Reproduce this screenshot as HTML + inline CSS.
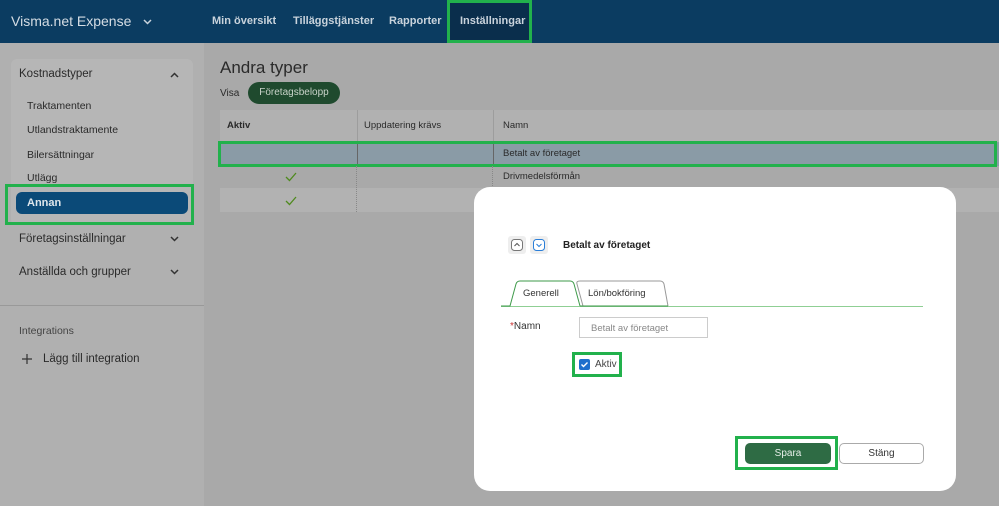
<!DOCTYPE html>
<html><head><meta charset="utf-8"><style>
*{box-sizing:border-box;margin:0;padding:0}
body{width:999px;height:506px;overflow:hidden;position:relative;background:#a9a9a9;font-family:"Liberation Sans",sans-serif;color:#2a2a2a}
.a{position:absolute}
.hdr{left:0;top:0;width:999px;height:43px;background:#0b3c61;color:#c9d3dc}
.hl{border:3px solid #22b14c}
.t{font-size:10.5px}
.nav{font-size:11px;font-weight:bold;top:15px}
</style></head><body>
<div class="a hdr">
 <div class="a" style="left:11px;top:13px;font-size:14px;color:#d5dde4">Visma.net Expense</div>
 <svg class="a" style="left:143px;top:19px" width="9" height="6"><path d="M1 1 L4.5 4.5 L8 1" stroke="#c9d3dc" stroke-width="1.5" fill="none"/></svg>
 <div class="a nav" style="left:212px">Min översikt</div>
 <div class="a nav" style="left:293px">Tilläggstjänster</div>
 <div class="a nav" style="left:389px">Rapporter</div>
 <div class="a hl" style="left:447px;top:0;width:85px;height:43px;background:#0a2e4c"></div>
 <div class="a nav" style="left:460px">Inställningar</div>
</div>
<div class="a" style="left:0;top:43px;width:204px;height:463px;background:#b0b0b0"></div>
<div class="a" style="left:11px;top:59px;width:182px;height:166px;background:#b6b6b6;border-radius:6px"></div>
<div class="a" style="left:19px;top:68px;font-size:11.5px">Kostnadstyper</div>
<svg class="a" style="left:170px;top:72px" width="9" height="6"><path d="M1 5 L4.5 1.5 L8 5" stroke="#333" stroke-width="1.5" fill="none"/></svg>
<div class="a t" style="left:27px;top:100px">Traktamenten</div>
<div class="a t" style="left:27px;top:124px">Utlandstraktamente</div>
<div class="a t" style="left:27px;top:149px">Bilersättningar</div>
<div class="a t" style="left:27px;top:172px">Utlägg</div>
<div class="a hl" style="left:5px;top:184px;width:189px;height:41px"></div>
<div class="a" style="left:16px;top:192px;width:172px;height:22px;background:#0b4a78;border-radius:6px;color:#dfe6ec;font-size:11px;font-weight:bold;padding:5px 11px">Annan</div>
<div class="a" style="left:19px;top:233px;font-size:11.5px">Företagsinställningar</div>
<svg class="a" style="left:170px;top:236px" width="9" height="6"><path d="M1 1 L4.5 4.5 L8 1" stroke="#333" stroke-width="1.5" fill="none"/></svg>
<div class="a" style="left:19px;top:266px;font-size:11.5px">Anställda och grupper</div>
<svg class="a" style="left:170px;top:269px" width="9" height="6"><path d="M1 1 L4.5 4.5 L8 1" stroke="#333" stroke-width="1.5" fill="none"/></svg>
<div class="a" style="left:0;top:305px;width:204px;height:1px;background:#999"></div>
<div class="a t" style="left:19px;top:325px;color:#444">Integrations</div>
<svg class="a" style="left:22px;top:354px" width="10" height="10"><path d="M5 0 V10 M0 5 H10" stroke="#333" stroke-width="1.2"/></svg>
<div class="a" style="left:43px;top:353px;font-size:11.5px">Lägg till integration</div>

<div class="a" style="left:220px;top:58px;font-size:17px">Andra typer</div>
<div class="a" style="left:220px;top:88px;font-size:10px">Visa</div>
<div class="a" style="left:248px;top:82px;width:92px;height:22px;border-radius:11px;background:#1f4a2e;color:#c9d3c9;font-size:10px;text-align:center;line-height:22px">Företagsbelopp</div>
<div class="a" style="left:220px;top:110px;width:779px;height:32px;background:#b1b1b1"></div>
<div class="a" style="left:357px;top:110px;width:1px;height:32px;background:#9d9d9d"></div>
<div class="a" style="left:493px;top:110px;width:1px;height:32px;background:#9d9d9d"></div>
<div class="a" style="left:227px;top:120px;font-size:9.5px;font-weight:bold">Aktiv</div>
<div class="a" style="left:364px;top:120px;font-size:9.5px">Uppdatering krävs</div>
<div class="a" style="left:503px;top:120px;font-size:9.5px">Namn</div>
<div class="a" style="left:220px;top:142px;width:779px;height:24px;background:#8a9ba6"></div>
<div class="a" style="left:357px;top:142px;width:1px;height:24px;background:#666"></div>
<div class="a" style="left:493px;top:142px;width:1px;height:24px;background:#666"></div>
<div class="a hl" style="left:218px;top:141px;width:779px;height:26px"></div>
<div class="a" style="left:503px;top:148px;font-size:9.5px">Betalt av företaget</div>
<div class="a" style="left:220px;top:188px;width:779px;height:24px;background:#b2b2b2"></div>
<div class="a" style="left:356px;top:166px;width:0;height:46px;border-left:1px dotted #888"></div>
<div class="a" style="left:492px;top:166px;width:0;height:24px;border-left:1px dotted #888"></div>
<svg class="a" style="left:285px;top:172px" width="12" height="10"><path d="M1 5 L4.5 8.5 L11 1" stroke="#4f8a1e" stroke-width="1.3" fill="none"/></svg>
<svg class="a" style="left:285px;top:196px" width="12" height="10"><path d="M1 5 L4.5 8.5 L11 1" stroke="#4f8a1e" stroke-width="1.3" fill="none"/></svg>
<div class="a" style="left:503px;top:171px;font-size:9.5px">Drivmedelsförmån</div>

<div class="a" style="left:474px;top:187px;width:482px;height:304px;background:#fff;border-radius:16px"></div>
<div class="a" style="left:508px;top:236px;width:18px;height:18px;background:#eee;border-radius:3px"></div>
<svg class="a" style="left:511px;top:239px" width="12" height="12"><rect x=".5" y=".5" width="11" height="11" rx="3" fill="#fff" stroke="#777"/><path d="M3.5 7 L6 4.5 L8.5 7" stroke="#555" fill="none"/></svg>
<div class="a" style="left:530px;top:236px;width:18px;height:18px;background:#eee;border-radius:3px"></div>
<svg class="a" style="left:533px;top:239px" width="12" height="12"><rect x=".5" y=".5" width="11" height="11" rx="3" fill="#fff" stroke="#2a7ed8"/><path d="M3.5 5 L6 7.5 L8.5 5" stroke="#2a7ed8" fill="none"/></svg>
<div class="a" style="left:563px;top:240px;font-size:10px;font-weight:bold;color:#222">Betalt av företaget</div>
<div class="a" style="left:501px;top:306px;width:422px;height:1px;background:#8fcf94"></div>
<svg class="a" style="left:500px;top:280px" width="170" height="28"><path d="M1 26 L10 26 L16 4 Q17 1 20 1 L70 1 Q73 1 74 4 L80 26" fill="#fff" stroke="#3e9a4a" stroke-width="1"/><path d="M80 26 L83 26 L77 4 Q76 1 80 1 L160 1 Q163 1 164 4 L168 26" fill="#fff" stroke="#999" stroke-width="1"/><path d="M80 26 L168 26" stroke="#3e9a4a"/></svg>
<div class="a" style="left:523px;top:288px;font-size:9.5px;color:#333">Generell</div>
<div class="a" style="left:588px;top:288px;font-size:9.5px;color:#333">Lön/bokföring</div>
<div class="a" style="left:510px;top:321px;font-size:10px;color:#333"><span style="color:#c33">*</span>Namn</div>
<div class="a" style="left:579px;top:317px;width:129px;height:21px;border:1px solid #ccc;font-size:9.5px;color:#888;padding:5px 11px">Betalt av företaget</div>
<div class="a hl" style="left:572px;top:352px;width:50px;height:25px"></div>
<svg class="a" style="left:579px;top:359px" width="11" height="11"><rect width="11" height="11" rx="2" fill="#1f6fcc"/><path d="M2.5 5.5 L4.5 7.5 L8.5 3.5" stroke="#fff" stroke-width="1.4" fill="none"/></svg>
<div class="a" style="left:595px;top:359px;font-size:10px;color:#444">Aktiv</div>
<div class="a hl" style="left:735px;top:436px;width:103px;height:34px"></div>
<div class="a" style="left:745px;top:443px;width:86px;height:21px;background:#2e6b44;border-radius:5px;color:#e8f0ea;font-size:10px;text-align:center;line-height:21px">Spara</div>
<div class="a" style="left:839px;top:443px;width:85px;height:21px;border:1px solid #aaa;border-radius:5px;color:#333;font-size:10px;text-align:center;line-height:19px">Stäng</div>
</body></html>
